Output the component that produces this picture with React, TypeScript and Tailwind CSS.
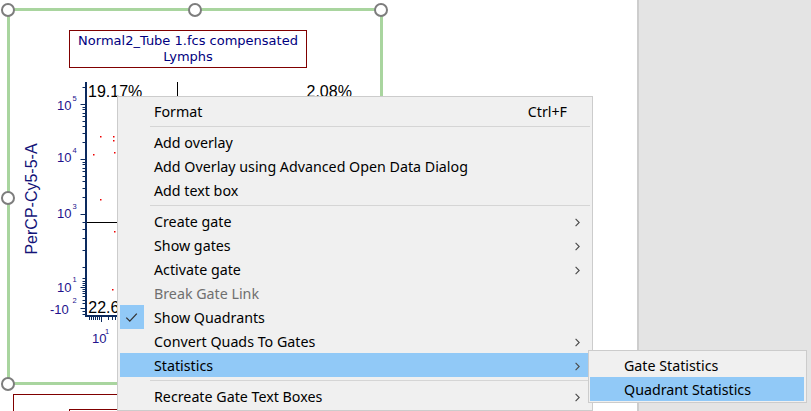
import React from "react";

const NAVY = "#0c2a5e";
const LBL = "#22128c";

function log10(n: number) {
  return Math.log(n) / Math.LN10;
}

const yMinor: number[] = (() => {
  const out: number[] = [];
  out.push(104 - 55 * log10(2));
  for (const base of [159, 214]) {
    for (let k = 2; k <= 9; k++) out.push(base - 55 * log10(k));
  }
  out.push(222, 229, 238, 250, 267, 278, 281, 283, 285, 289, 291, 293, 296, 300, 303, 311, 314);
  return out;
})();
const yMajor = [104, 159, 214, 287, 308];
const xMinor = [89, 91, 93, 95, 97, 99, 108, 112, 115];

const dots: [number, number][] = [
  [100, 136],
  [113, 136],
  [113, 140],
  [93, 154],
  [114, 152],
  [100, 199],
  [114, 231],
  [112, 289],
];

function Chart() {
  return (
    <svg
      className="absolute left-0 top-0 pointer-events-none"
      width={637}
      height={411}
      viewBox="0 0 637 411"
    >
      {/* axes */}
      <rect x={85} y={82} width={2} height={235} fill={NAVY} />
      <rect x={85} y={315} width={40} height={2} fill={NAVY} />
      {yMinor.map((y, i) => (
        <line key={"ym" + i} x1={82.5} x2={85} y1={Math.round(y) + 0.5} y2={Math.round(y) + 0.5} stroke={NAVY} strokeWidth={1} />
      ))}
      {yMajor.map((y, i) => (
        <line key={"yM" + i} x1={80.5} x2={85} y1={y + 0.5} y2={y + 0.5} stroke={NAVY} strokeWidth={1} />
      ))}
      {xMinor.map((x, i) => (
        <line key={"xm" + i} x1={x + 0.5} x2={x + 0.5} y1={317} y2={320} stroke={NAVY} strokeWidth={1} />
      ))}
      <line x1={101.5} x2={101.5} y1={317} y2={322} stroke={NAVY} strokeWidth={1} />

      {/* quadrant lines */}
      <line x1={177.5} x2={177.5} y1={82} y2={110} stroke="#000" strokeWidth={1} />
      <line x1={87} x2={130} y1={222.5} y2={222.5} stroke="#000" strokeWidth={1} />

      {/* events */}
      {dots.map(([x, y], i) => (
        <rect key={"d" + i} x={x} y={y} width={1.5} height={1.5} fill="#ee0000" />
      ))}

      {/* y labels */}
      <g fontFamily="'Liberation Sans', Arial, sans-serif" fill={LBL}>
        <text x={57} y={110} fontSize={13}>10</text>
        <text x={72.5} y={101} fontSize={7.5}>5</text>
        <text x={57} y={162} fontSize={13}>10</text>
        <text x={72.5} y={153} fontSize={7.5}>4</text>
        <text x={57} y={218} fontSize={13}>10</text>
        <text x={72.5} y={209} fontSize={7.5}>3</text>
        <text x={57} y={292} fontSize={13}>10</text>
        <text x={72.5} y={282} fontSize={7.5}>1</text>
        <text x={50} y={313.5} fontSize={13}>-10</text>
        <text x={72.5} y={303} fontSize={7.5}>2</text>
        <text x={92} y={343} fontSize={13}>10</text>
        <text x={105} y={334} fontSize={7.5}>1</text>
      </g>

      {/* axis title */}
      <text
        x={0}
        y={0}
        transform="translate(36.5 199) rotate(-90)"
        textAnchor="middle"
        fontFamily="'Liberation Sans', Arial, sans-serif"
        fontSize={16}
        fill="#141478"
      >
        PerCP-Cy5-5-A
      </text>

      {/* quadrant percentages */}
      <g fontFamily="'Liberation Sans', Arial, sans-serif" fontSize={16} fill="#000">
        <text x={88} y={97}>19.17%</text>
        <text x={306.5} y={97}>2.08%</text>
        <text x={88.3} y={313.3}>22.6</text>
      </g>
    </svg>
  );
}

function Handle({ cls }: { cls: string }) {
  return (
    <div
      className={
        "absolute w-[14px] h-[14px] -translate-x-1/2 -translate-y-1/2 rounded-full border-[2.6px] border-[#7d7d7d] bg-white " +
        cls
      }
    />
  );
}

function Chevron() {
  return (
    <svg width={5} height={9} viewBox="0 0 5 9" className="ml-auto">
      <path d="M0.6 0.8 L4.2 4.5 L0.6 8.2" fill="none" stroke="#4a4a4a" strokeWidth={1.1} />
    </svg>
  );
}

type ItemProps = {
  label: string;
  shortcut?: string;
  sub?: boolean;
  disabled?: boolean;
  checked?: boolean;
  active?: boolean;
};

function Item({ label, shortcut, sub, disabled, checked, active }: ItemProps) {
  return (
    <div
      className={
        "relative flex items-center h-[24px] pt-[2px] pl-[34px] pr-[10px] " +
        (active ? "bg-[#91c9f7]" : "")
      }
    >
      {checked && (
        <div className="absolute left-0 top-0 w-[24px] h-[24px] bg-[#91c9f7]">
          <svg width={24} height={24} viewBox="0 0 24 24">
            <path d="M6.3 12.6 L9.8 16.1 L16.8 8.6" fill="none" stroke="#333" strokeWidth={1.3} />
          </svg>
        </div>
      )}
      <span className={disabled ? "text-[#6f6f6f]" : "text-black"}>{label}</span>
      {shortcut && <span className="ml-auto mr-[13px] text-black">{shortcut}</span>}
      {sub && <Chevron />}
    </div>
  );
}

function Sep() {
  return <div className="ml-[30px] mt-[3px] mb-[3px] h-px bg-[#d5d5d5]" />;
}

export default function App() {
  return (
    <div className="relative flex w-[811px] h-[411px] overflow-hidden bg-white">
      <div className="relative w-[637px] h-full shrink-0">
        {/* next plot frame, bottom */}
        <div className="absolute left-[13px] top-[394px] w-[400px] h-[60px] border border-[#800000]" />
        <div className="absolute left-[69px] top-[409px] w-[300px] h-[40px] border border-[#800000]" />

        {/* selection frame */}
        <div className="absolute left-[7px] top-[8px] w-[376px] h-[377px] border-[3px] border-[#a9d59f]" />

        {/* title box */}
        <div className="absolute left-[69px] top-[30px] w-[238px] h-[38px] border border-[#800000] flex flex-col items-center justify-center font-['DejaVu_Sans',sans-serif] text-[13px] leading-[16px] text-[#000080]">
          <div>Normal2_Tube 1.fcs compensated</div>
          <div>Lymphs</div>
        </div>

        <Chart />

        <Handle cls="left-[7.5px] top-[9.5px]" />
        <Handle cls="left-[195px] top-[9.5px]" />
        <Handle cls="left-[381px] top-[9.5px]" />
        <Handle cls="left-[7.5px] top-[198px]" />
        <Handle cls="left-[7.5px] top-[383.5px]" />
      </div>
      <div className="flex-1 h-full bg-[#e4e4e4] border-l-2 border-[#cdcdcd]" />

      {/* context menu */}
      <div className="absolute left-[117px] top-[96px] w-[476px] border border-[#cccccc] bg-[#f0f0f0] p-[2px] font-['Noto_Sans',sans-serif] text-[14.25px] leading-[20px]">
        <Item label="Format" shortcut="Ctrl+F" />
        <Sep />
        <Item label="Add overlay" />
        <Item label="Add Overlay using Advanced Open Data Dialog" />
        <Item label="Add text box" />
        <Sep />
        <Item label="Create gate" sub />
        <Item label="Show gates" sub />
        <Item label="Activate gate" sub />
        <Item label="Break Gate Link" disabled />
        <Item label="Show Quadrants" checked />
        <Item label="Convert Quads To Gates" sub />
        <Item label="Statistics" sub active />
        <Sep />
        <Item label="Recreate Gate Text Boxes" sub />
      </div>

      {/* submenu */}
      <div className="absolute left-[588px] top-[350px] w-[219px] border border-[#cccccc] bg-[#f0f0f0] pt-[2px] pb-[1px] pl-[1px] pr-[2px] font-['Noto_Sans',sans-serif] text-[14.25px] leading-[20px]">
        <Item label="Gate Statistics" />
        <Item label="Quadrant Statistics" active />
      </div>
    </div>
  );
}
